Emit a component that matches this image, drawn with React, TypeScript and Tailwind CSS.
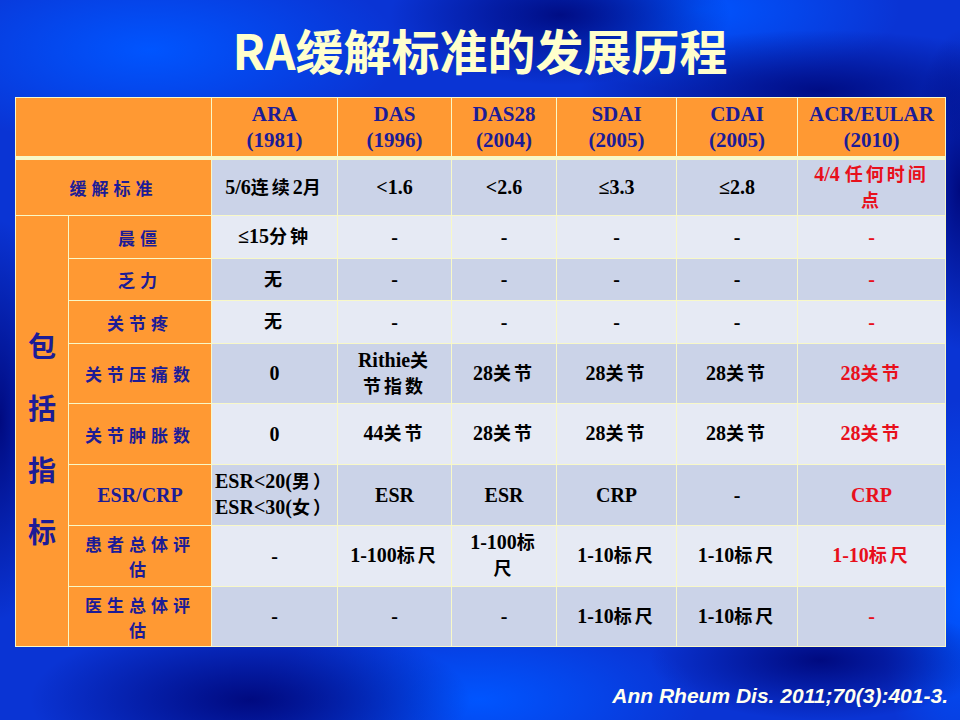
import React from "react";

const CJK = /([\u3400-\u9fff\uff00-\uffef]+)/;

function T({ s }: { s: string }) {
  const parts = s.split(CJK);
  return (
    <>
      {parts.map((p, i) =>
        CJK.test(p) ? (
          <span key={i} className="text-[18px] tracking-[3px] font-bold">
            {p}
          </span>
        ) : (
          <React.Fragment key={i}>{p}</React.Fragment>
        )
      )}
    </>
  );
}

type Val = { lines: string[]; red?: boolean };

function Cell({ v, dark }: { v: Val; dark: boolean }) {
  return (
    <div
      className={
        "flex flex-col items-center justify-center text-center text-[20px] font-bold leading-[25px] whitespace-nowrap font-['Liberation_Serif','Noto_Sans_CJK_SC',serif] " +
        (dark ? "bg-[#cbd3e8] " : "bg-[#e6eaf4] ") +
        (v.red ? "text-[#e8101c]" : "text-black")
      }
    >
      {v.lines.map((l, i) => (
        <div key={i}>
          <T s={l} />
        </div>
      ))}
    </div>
  );
}

function Label({ lines, latin }: { lines: string[]; latin?: boolean }) {
  return (
    <div
      className={
        "bg-[#ff9933] flex flex-col items-center justify-center text-center text-[#1c1c96] whitespace-nowrap " +
        (latin
          ? "text-[20px] font-bold font-['Liberation_Serif',serif]"
          : "text-[17px] leading-[25px] tracking-[5px] font-bold font-['Noto_Sans_CJK_SC',sans-serif]")
      }
    >
      {lines.map((l, i) => (
        <div key={i}>{l}</div>
      ))}
    </div>
  );
}

const headers: [string, string][] = [
  ["ARA", "(1981)"],
  ["DAS", "(1996)"],
  ["DAS28", "(2004)"],
  ["SDAI", "(2005)"],
  ["CDAI", "(2005)"],
  ["ACR/EULAR", "(2010)"],
];

const v = (s: string, red?: boolean): Val => ({ lines: [s], red });
const v2 = (a: string, b: string, red?: boolean): Val => ({ lines: [a, b], red });

const rows: { label: string[]; latin?: boolean; vals: Val[] }[] = [
  { label: ["晨僵"], vals: [v("≤15分钟"), v("-"), v("-"), v("-"), v("-"), v("-", true)] },
  { label: ["乏力"], vals: [v("无"), v("-"), v("-"), v("-"), v("-"), v("-", true)] },
  { label: ["关节疼"], vals: [v("无"), v("-"), v("-"), v("-"), v("-"), v("-", true)] },
  {
    label: ["关节压痛数"],
    vals: [v("0"), v2("Rithie关", "节指数"), v("28关节"), v("28关节"), v("28关节"), v("28关节", true)],
  },
  {
    label: ["关节肿胀数"],
    vals: [v("0"), v("44关节"), v("28关节"), v("28关节"), v("28关节"), v("28关节", true)],
  },
  {
    label: ["ESR/CRP"],
    latin: true,
    vals: [v2("ESR<20(男）", "ESR<30(女）"), v("ESR"), v("ESR"), v("CRP"), v("-"), v("CRP", true)],
  },
  {
    label: ["患者总体评", "估"],
    vals: [v("-"), v("1-100标尺"), v2("1-100标", "尺"), v("1-10标尺"), v("1-10标尺"), v("1-10标尺", true)],
  },
  {
    label: ["医生总体评", "估"],
    vals: [v("-"), v("-"), v("-"), v("1-10标尺"), v("1-10标尺"), v("-", true)],
  },
];

const firstRow: Val[] = [
  v("5/6连续2月"),
  v("<1.6"),
  v("<2.6"),
  v("≤3.3"),
  v("≤2.8"),
  v2("4/4 任何时间", "点", true),
];

export default function App() {
  return (
    <div className="w-[960px] h-[720px] overflow-hidden flex flex-col bg-[#0a34d4] bg-[radial-gradient(ellipse_170px_70px_at_560px_15px,#000d85,transparent),radial-gradient(ellipse_240px_60px_at_820px_90px,#000d85,transparent),radial-gradient(ellipse_220px_80px_at_250px_700px,#000a80,transparent),radial-gradient(ellipse_170px_60px_at_820px_660px,#000a80,transparent),radial-gradient(ellipse_50px_200px_at_0px_420px,#000a80,transparent),radial-gradient(ellipse_50px_160px_at_960px_190px,#000a80,transparent),radial-gradient(ellipse_250px_100px_at_150px_50px,#0055ff,transparent),radial-gradient(ellipse_200px_80px_at_700px_10px,#0055ff,transparent),radial-gradient(ellipse_220px_90px_at_480px_700px,#0055ff,transparent),radial-gradient(ellipse_80px_200px_at_960px_600px,#0055ff,transparent)]">
      <div className="h-[97px] flex items-center justify-center pt-[0px]">
        <h1 className="text-[48px] leading-none font-bold text-[#ffffcc] font-['Noto_Sans_CJK_SC',sans-serif]">
          RA缓解标准的发展历程
        </h1>
      </div>
      <div className="ml-[15px] w-[931px] grid grid-cols-[52px_142px_125px_113px_104px_119px_120px_147px] grid-rows-[58px_2px_55px_42px_41px_42px_59px_60px_60px_60px_59px] gap-px p-px bg-[#f8f8c8]">
        <div className="col-span-2 bg-[#ff9933]" />
        {headers.map(([a, b], i) => (
          <div
            key={i}
            className="bg-[#ff9933] flex flex-col items-center justify-center text-center text-[21px] leading-[26px] font-bold text-[#1c1c96] font-['Liberation_Serif',serif]"
          >
            <div>{a}</div>
            <div>{b}</div>
          </div>
        ))}
        <div className="col-span-8" />
        <div className="col-span-2 bg-[#ff9933] flex items-center justify-center text-[17px] tracking-[5px] font-bold text-[#1c1c96] font-['Noto_Sans_CJK_SC',sans-serif]">
          缓解标准
        </div>
        {firstRow.map((c, i) => (
          <Cell key={i} v={c} dark={true} />
        ))}
        <div className="row-span-8 bg-[#ff9933] flex flex-col items-center justify-center gap-[34px] pt-[14px] text-[28px] leading-[28px] font-bold text-[#1c1c96] font-['Noto_Sans_CJK_SC',sans-serif]">
          <div>包</div>
          <div>括</div>
          <div>指</div>
          <div>标</div>
        </div>
        {rows.map((r, ri) => (
          <React.Fragment key={ri}>
            <Label lines={r.label} latin={r.latin} />
            {r.vals.map((c, ci) => (
              <Cell key={ci} v={c} dark={ri % 2 === 1} />
            ))}
          </React.Fragment>
        ))}
      </div>
      <div className="flex-1 flex justify-end items-start pt-[37px] pr-[12px]">
        <div className="text-[21px] leading-[24px] font-bold italic text-[#fffff0] font-['Liberation_Sans',sans-serif]">
          Ann Rheum Dis. 2011;70(3):401-3.
        </div>
      </div>
    </div>
  );
}
